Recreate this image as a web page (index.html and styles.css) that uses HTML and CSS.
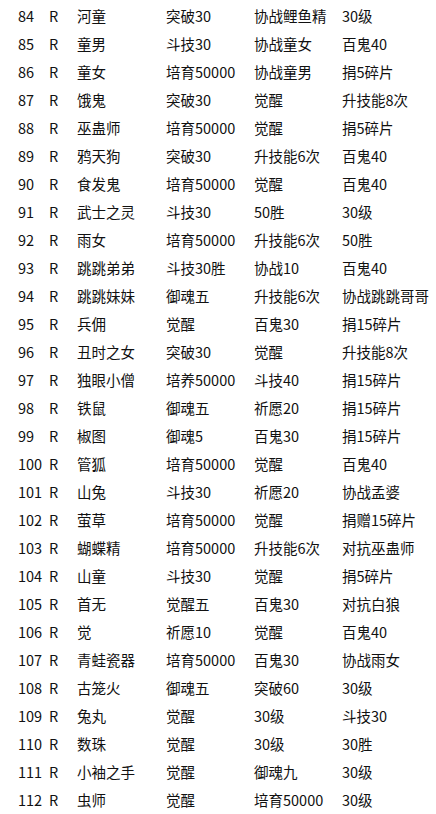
FILE: index.html
```html
<!DOCTYPE html>
<html lang="zh">
<head>
<meta charset="utf-8">
<link rel="stylesheet" href="styles.css">
</head>
<body>
<div class="list">
<div class="row"><span>84</span><span>R</span><span>河童</span><span>突破30</span><span>协战鲤鱼精</span><span>30级</span></div>
<div class="row"><span>85</span><span>R</span><span>童男</span><span>斗技30</span><span>协战童女</span><span>百鬼40</span></div>
<div class="row"><span>86</span><span>R</span><span>童女</span><span>培育50000</span><span>协战童男</span><span>捐5碎片</span></div>
<div class="row"><span>87</span><span>R</span><span>饿鬼</span><span>突破30</span><span>觉醒</span><span>升技能8次</span></div>
<div class="row"><span>88</span><span>R</span><span>巫蛊师</span><span>培育50000</span><span>觉醒</span><span>捐5碎片</span></div>
<div class="row"><span>89</span><span>R</span><span>鸦天狗</span><span>突破30</span><span>升技能6次</span><span>百鬼40</span></div>
<div class="row"><span>90</span><span>R</span><span>食发鬼</span><span>培育50000</span><span>觉醒</span><span>百鬼40</span></div>
<div class="row"><span>91</span><span>R</span><span>武士之灵</span><span>斗技30</span><span>50胜</span><span>30级</span></div>
<div class="row"><span>92</span><span>R</span><span>雨女</span><span>培育50000</span><span>升技能6次</span><span>50胜</span></div>
<div class="row"><span>93</span><span>R</span><span>跳跳弟弟</span><span>斗技30胜</span><span>协战10</span><span>百鬼40</span></div>
<div class="row"><span>94</span><span>R</span><span>跳跳妹妹</span><span>御魂五</span><span>升技能6次</span><span>协战跳跳哥哥</span></div>
<div class="row"><span>95</span><span>R</span><span>兵佣</span><span>觉醒</span><span>百鬼30</span><span>捐15碎片</span></div>
<div class="row"><span>96</span><span>R</span><span>丑时之女</span><span>突破30</span><span>觉醒</span><span>升技能8次</span></div>
<div class="row"><span>97</span><span>R</span><span>独眼小僧</span><span>培养50000</span><span>斗技40</span><span>捐15碎片</span></div>
<div class="row"><span>98</span><span>R</span><span>铁鼠</span><span>御魂五</span><span>祈愿20</span><span>捐15碎片</span></div>
<div class="row"><span>99</span><span>R</span><span>椒图</span><span>御魂5</span><span>百鬼30</span><span>捐15碎片</span></div>
<div class="row"><span>100</span><span>R</span><span>管狐</span><span>培育50000</span><span>觉醒</span><span>百鬼40</span></div>
<div class="row"><span>101</span><span>R</span><span>山兔</span><span>斗技30</span><span>祈愿20</span><span>协战孟婆</span></div>
<div class="row"><span>102</span><span>R</span><span>萤草</span><span>培育50000</span><span>觉醒</span><span>捐赠15碎片</span></div>
<div class="row"><span>103</span><span>R</span><span>蝴蝶精</span><span>培育50000</span><span>升技能6次</span><span>对抗巫蛊师</span></div>
<div class="row"><span>104</span><span>R</span><span>山童</span><span>斗技30</span><span>觉醒</span><span>捐5碎片</span></div>
<div class="row"><span>105</span><span>R</span><span>首无</span><span>觉醒五</span><span>百鬼30</span><span>对抗白狼</span></div>
<div class="row"><span>106</span><span>R</span><span>觉</span><span>祈愿10</span><span>觉醒</span><span>百鬼40</span></div>
<div class="row"><span>107</span><span>R</span><span>青蛙瓷器</span><span>培育50000</span><span>百鬼30</span><span>协战雨女</span></div>
<div class="row"><span>108</span><span>R</span><span>古笼火</span><span>御魂五</span><span>突破60</span><span>30级</span></div>
<div class="row"><span>109</span><span>R</span><span>兔丸</span><span>觉醒</span><span>30级</span><span>斗技30</span></div>
<div class="row"><span>110</span><span>R</span><span>数珠</span><span>觉醒</span><span>30级</span><span>30胜</span></div>
<div class="row"><span>111</span><span>R</span><span>小袖之手</span><span>觉醒</span><span>御魂九</span><span>30级</span></div>
<div class="row"><span>112</span><span>R</span><span>虫师</span><span>觉醒</span><span>培育50000</span><span>30级</span></div>
</div>
</body>
</html>
```
FILE: styles.css
```css
html, body {
  margin: 0;
  padding: 0;
  background: #ffffff;
}
body {
  font-family: "Noto Sans CJK SC", "Noto Sans", sans-serif;
  font-size: 14.5px;
  color: #111111;
}
.list {
  padding: 2px 0 0 18px;
}
.row {
  display: grid;
  grid-template-columns: 31px 28px 89px 88px 88px 1fr;
  height: 28px;
  line-height: 28px;
  white-space: nowrap;
}
```
